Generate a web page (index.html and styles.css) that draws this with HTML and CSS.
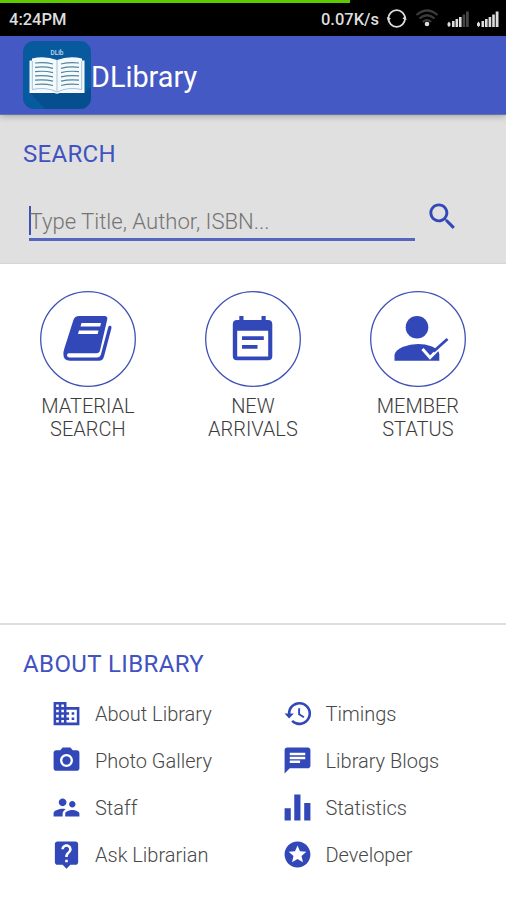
FILE: index.html
```html
<!DOCTYPE html>
<html lang="en">
<head>
<meta charset="utf-8">
<title>DLibrary</title>
<link rel="stylesheet" href="styles.css">
</head>
<body>
<div class="status">
  <div class="progress"></div>
  <span class="clock">4:24PM</span>
  <span class="speed">0.07K/s</span>
  <svg class="s-icons" width="116" height="24" viewBox="0 0 116 24">
    <circle cx="10.700" cy="12.500" r="8.300" fill="none" stroke="#ddd" stroke-width="1.800"/>
    <path d="M0.800 11l4.200 1.500-3 2.700zM20.600 14l-4.200-1.500 3-2.700z" fill="#ddd"/>
    <g fill="none" stroke="#3c3c3c" stroke-width="2.200"><path d="M30.500 9q10.500-9 21 0"/><path d="M33.500 12.500q7.500-6.500 15 0"/><path d="M36.800 15.800q4.200-3.500 8.400 0"/></g>
    <circle cx="41" cy="18" r="2.300" fill="#ddd"/>
    <path d="M61.500 17.500l1.500-2 1.500 2v2L63 21l-1.500-1.500zM66 15h2.600v6H66zM69.500 13h2.600v8h-2.600zM73 11h2.600v10H73z" fill="#ddd"/>
    <path d="M76.600 8.500h2.600V21h-2.600zM80 5.500h2.800V21H80z" fill="#444"/>
    <path d="M91 17.500l1.500-2 1.500 2v2L92.500 21 91 19.500zM95.500 15h2.600v6h-2.600zM99 13h2.600v8H99zM102.600 11h2.600v10h-2.600zM106.200 8.500h2.600V21h-2.600zM109.700 5.500h2.800V21h-2.800z" fill="#ddd"/>
  </svg>
</div>
<header class="appbar">
  <svg class="logo" width="68" height="68" viewBox="0 0 68 68">
    <rect width="68" height="68" rx="11" fill="#075a9e"/>
    <path d="M7 52h54l7-6v11a11 11 0 0 1-11 11H22z" fill="#064f8f"/>
    <text x="34" y="13.500" text-anchor="middle" class="logo-text">DLib</text>
    <path d="M6.500 19.500H9v-2q13-3 25 1.500 12-4.500 25-1.500v2h2.500V52H36.500q-2.500 1.500-5 0H6.500z" fill="#f4f9fc"/>
    <path d="M9 48.500q14-3 25 2.500 11-5.500 25-2.500M34 19v31M9.300 20v28M58.700 20v28" fill="none" stroke="#a8c3d6" stroke-width="1"/>
    <path d="M12 22q10-1 18 1M12 26.300q10-1 18 1M12 30.600q10-1 18 1M12 34.900q10-1 18 1M12 39.200q10-1 18 1M12 43.500q10-1 18 1M38 23q8-2 18-1M38 27.300q8-2 18-1M38 31.600q8-2 18-1M38 35.900q8-2 18-1M38 40.200q8-2 18-1M38 44.500q8-2 18-1" fill="none" stroke="#52869f" stroke-width="1.200"/>
  </svg>
  <h1 class="title">DLibrary</h1>
</header>
<section class="search">
  <h2 class="heading">SEARCH</h2>
  <div class="search-row">
    <div class="field"><span class="caret"></span><span class="hint">Type Title, Author, ISBN...</span></div>
    <svg class="search-icon" width="35" height="35" viewBox="0 0 24 24"><path d="M15.500 14h-.79l-.28-.27C15.410 12.590 16 11.110 16 9.500 16 5.910 13.090 3 9.500 3S3 5.910 3 9.500 5.910 16 9.500 16c1.610 0 3.090-.59 4.230-1.570l.27.28v.79l5 4.990L20.490 19l-4.990-5zm-6 0C7.010 14 5 11.990 5 9.500S7.010 5 9.500 5 14 7.010 14 9.500 11.990 14 9.500 14z"/></svg>
  </div>
</section>
<main class="actions">
  <div class="action">
    <svg width="96" height="96" viewBox="0 0 96 96">
      <circle class="ring" cx="48" cy="48" r="47.300"/>
      <path d="M39 25H64.500q3.500 0 2.700 3.500L60 59.500q-.6 2.700-3.500 2.700H29q-2.200 0-2 2.400.2 1.900 2.600 1.900H57q3 0 3.900-3L68.300 36q.6-1.600 2-1.300 1.600.4 1.200 2.300L64 65.500q-1 4.200-5 4.200H30q-6.800 0-6.600-6.700 0-2.500.8-5L33.500 28.800Q34.700 25 39 25z"/>
      <path d="M41.500 32h19.500l-.8 3.600H40.500zM39 39.400h19.500l-.8 3.600H38z" fill="#fff"/>
    </svg>
    <span>MATERIAL<br>SEARCH</span>
  </div>
  <div class="action">
    <svg width="96" height="96" viewBox="0 0 96 96">
      <circle class="ring" cx="48" cy="48" r="47.300"/>
      <path fill-rule="evenodd" d="M34.300 25h4.200v4h18V25h4.200v4H63q4.300 0 4.300 4.300V65q0 4.300-4.300 4.300H32q-4.200 0-4.200-4.300V33.300Q27.800 29 32 29h2.300zM32.200 39.700V65.500H63.200V39.700zM37 45.200h21.800V49H37zM37 54h15.500v3.800H37z"/>
    </svg>
    <span>NEW<br>ARRIVALS</span>
  </div>
  <div class="action">
    <svg width="96" height="96" viewBox="0 0 96 96">
      <circle class="ring" cx="48" cy="48" r="47.300"/>
      <circle cx="47" cy="36.300" r="11.300"/>
      <path d="M24.500 69.700V64q1-5 8-8 15-5.500 29.500-.5 7.300 3 7.300 8v6.200z"/>
      <path d="M52.500 58l7.500 8.500 7.500-7.500" fill="none" stroke="#fff" stroke-width="3"/>
      <path d="M63.500 60.500L77.500 48" fill="none" stroke="#3248b8" stroke-width="2.800"/>
    </svg>
    <span>MEMBER<br>STATUS</span>
  </div>
</main>
<section class="about">
  <h2 class="heading wide">ABOUT LIBRARY</h2>
  <div class="links">
    <div class="link"><svg viewBox="0 0 24 24"><path d="M12 7V3H2v18h20V7H12zM6 19H4v-2h2v2zm0-4H4v-2h2v2zm0-4H4V9h2v2zm0-4H4V5h2v2zm4 12H8v-2h2v2zm0-4H8v-2h2v2zm0-4H8V9h2v2zm0-4H8V5h2v2zm10 12h-8v-2h2v-2h-2v-2h2v-2h-2V9h8v10zm-2-8h-2v2h2v-2zm0 4h-2v2h2v-2z"/></svg><span>About Library</span></div>
    <div class="link"><svg viewBox="0 0 24 24"><path d="M13.500 3a9 9 0 0 0-9 9H2l3.500 3.800L9.200 12H6.500a7 7 0 1 1 2.050 4.950l-1.410 1.420A9 9 0 1 0 13.500 3zM12.500 8v5l4.140 2.500.72-1.210L14 12.250V8z"/></svg><span>Timings</span></div>
    <div class="link"><svg viewBox="0 0 24 24"><circle cx="12" cy="12" r="3.200"/><path d="M9 2L7.170 4H4c-1.100 0-2 .9-2 2v12c0 1.100.9 2 2 2h16c1.100 0 2-.9 2-2V6c0-1.100-.9-2-2-2h-3.170L15 2H9zm3 15c-2.760 0-5-2.240-5-5s2.240-5 5-5 5 2.240 5 5-2.240 5-5 5z"/></svg><span>Photo Gallery</span></div>
    <div class="link"><svg viewBox="0 0 24 24"><path d="M20 2H4c-1.100 0-1.990.9-1.990 2L2 22l4-4h14c1.100 0 2-.9 2-2V4c0-1.100-.9-2-2-2zM6 9h12v2H6V9zm8 5H6v-2h8v2zm4-6H6V6h12v2z"/></svg><span>Library Blogs</span></div>
    <div class="link"><svg viewBox="0 0 24 24"><path d="M16.500 12c1.380 0 2.490-1.120 2.490-2.500S17.880 7 16.500 7C15.120 7 14 8.120 14 9.500s1.120 2.500 2.500 2.500zM9 11c1.660 0 2.990-1.340 2.990-3S10.660 5 9 5C7.340 5 6 6.340 6 8s1.340 3 3 3zm7.500 3c-1.830 0-5.500.92-5.500 2.750V19h11v-2.250c0-1.830-3.670-2.750-5.500-2.750zM9 13c-2.330 0-7 1.170-7 3.500V19h7v-2.250c0-.85.33-2.340 2.370-3.470C10.500 13.100 9.660 13 9 13z"/></svg><span>Staff</span></div>
    <div class="link"><svg viewBox="0 0 24 24"><path d="M2 12.500h4.800V22H2zM9.500 2h4.800v20H9.500zM17.200 8.500H22V22h-4.800z"/></svg><span>Statistics</span></div>
    <div class="link"><svg viewBox="0 0 24 24"><path d="M19 2H5c-1.110 0-2 .9-2 2v14c0 1.100.89 2 2 2h4l3 3 3-3h4c1.100 0 2-.9 2-2V4c0-1.100-.9-2-2-2zm-6 16h-2v-2h2v2zm2.070-7.750l-.9.920C13.450 11.900 13 12.500 13 14h-2v-.5c0-1.100.45-2.100 1.170-2.830l1.240-1.260c.37-.36.59-.86.59-1.410 0-1.100-.9-2-2-2s-2 .9-2 2H8c0-2.210 1.790-4 4-4s4 1.790 4 4c0 .88-.36 1.680-.93 2.250z"/></svg><span>Ask Librarian</span></div>
    <div class="link"><svg viewBox="0 0 24 24"><path d="M11.990 2C6.470 2 2 6.480 2 12s4.470 10 9.990 10C17.520 22 22 17.520 22 12S17.520 2 11.990 2zm4.240 16L12 15.450 7.770 18l1.120-4.810-3.730-3.230 4.920-.42L12 5l1.920 4.530 4.920.42-3.730 3.230L16.230 18z"/></svg><span>Developer</span></div>
  </div>
</section>
</body>
</html>
```

FILE: styles.css
```css
* { box-sizing: border-box; }
body {
  margin: 0;
  width: 506px;
  height: 900px;
  display: flex;
  flex-direction: column;
  background: #fff;
  font-family: Roboto, sans-serif;
  font-weight: 300;
  overflow: hidden;
}
h1, h2 { margin: 0; font-weight: 400; }
svg { display: block; flex: none; fill: #3248b8; }
.status {
  position: relative;
  flex: none;
  height: 36px;
  padding: 2px 4px 0 9px;
  display: flex;
  align-items: center;
  background: #000;
  color: #ddd;
  font-size: 16.500px;
  font-weight: 500;
}
.progress { position: absolute; left: 0; top: 0; width: 350px; height: 3px; background: #5ecb00; }
.clock { flex: 1; }
.speed { margin-right: 7px; }
.s-icons { margin-top: -3px; }
.appbar {
  position: relative;
  flex: none;
  height: 79px;
  padding: 5px 23px;
  display: flex;
  align-items: flex-start;
  background: #4459c3;
  border-bottom: 1px solid #6671a8;
  box-shadow: 0 1px 7px rgba(0, 0, 0, .3);
}
.logo-text { font: 500 6.500px Roboto, sans-serif; fill: #c4dcec; }
.title { color: #fff; font-size: 28.800px; line-height: 34px; margin-top: 19px; }
.search {
  flex: none;
  height: 149px;
  padding: 22px 23px 0;
  background: #e0e0e0;
  border-bottom: 1px solid #d6d6d6;
}
.heading { color: #4153c0; font-size: 24px; line-height: 34px; letter-spacing: .3px; }
.heading.wide { letter-spacing: .4px; }
.search-row { display: flex; align-items: flex-start; margin-top: 28px; padding-left: 6px; }
.field {
  width: 386px;
  height: 42px;
  display: flex;
  align-items: center;
  border-bottom: 3px solid #5566bd;
  margin-right: 10px;
}
.caret { width: 2px; height: 29px; background: #3f51b5; margin-top: 3px; margin-right: -1px; }
.hint { font-size: 22.100px; color: #747474; line-height: 30px; margin-top: 5px; margin-left: -.5px; white-space: nowrap; }
.actions {
  flex: none;
  height: 359px;
  padding: 27px 5.600px 0 5.400px;
  display: grid;
  grid-template-columns: repeat(3, 165px);
}
.action { display: flex; flex-direction: column; align-items: center; text-align: center; }
.action span { margin-top: 8px; font-size: 20px; line-height: 23px; color: #3c3c3c; }
.ring { fill: #fff; stroke: #3f51b5; stroke-width: 1.300; }
.about { flex: 1; border-top: 2px solid #dedede; padding: 22px 0 0 23px; }
.links { display: grid; grid-template-columns: 230.500px 231px; grid-auto-rows: 47px; padding-left: 28px; margin-top: 9px; }
.link { display: flex; align-items: center; }
.link svg { width: 31px; height: 31px; margin-right: 13px; }
.link span { font-size: 20px; color: #484848; line-height: 28px; white-space: nowrap; }
```
